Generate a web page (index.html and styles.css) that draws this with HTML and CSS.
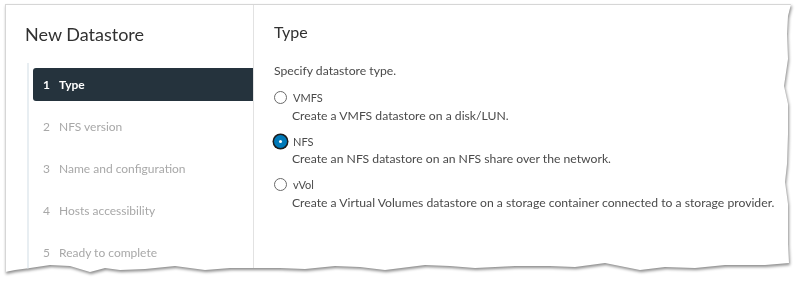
FILE: index.html
```html
<!DOCTYPE html>
<html lang="en">
<head>
  <meta charset="UTF-8">
  <title>New Datastore</title>
  <link rel="stylesheet" href="styles.css">
</head>
<body>
  <div class="paper">
    <div class="wizard">
      <div class="sidebar">
        <h2 class="wizard-title">New Datastore</h2>
        <div class="steps">
          <div class="step active"><span class="num">1</span>Type</div>
          <div class="step"><span class="num">2</span>NFS version</div>
          <div class="step"><span class="num">3</span>Name and configuration</div>
          <div class="step"><span class="num">4</span>Hosts accessibility</div>
          <div class="step"><span class="num">5</span>Ready to complete</div>
        </div>
      </div>
      <div class="content">
        <h3 class="page-title">Type</h3>
        <p class="intro">Specify datastore type.</p>
        <div class="option">
          <div class="radio-row"><span class="radio"></span><span class="label">VMFS</span></div>
          <p class="desc">Create a VMFS datastore on a disk/LUN.</p>
        </div>
        <div class="option">
          <div class="radio-row"><span class="radio checked"></span><span class="label">NFS</span></div>
          <p class="desc">Create an NFS datastore on an NFS share over the network.</p>
        </div>
        <div class="option">
          <div class="radio-row"><span class="radio"></span><span class="label">vVol</span></div>
          <p class="desc">Create a Virtual Volumes datastore on a storage container connected to a storage provider.</p>
        </div>
      </div>
    </div>
  </div>
</body>
</html>
```

FILE: styles.css
```css
body {
  margin: 0;
  padding: 4px 0 0 5px;
  background-color: #fff;
  font-family: 'Lato', sans-serif;
  color: #4a4a4a;
  overflow: hidden;
}

/* torn paper look */
.paper {
  width: 788px;
  height: 274px;
  filter: drop-shadow(1px 2px 1.5px rgba(0, 0, 0, 0.45));
}
.wizard {
  display: flex;
  height: 100%;
  overflow: hidden;
  background-color: #fff;
  border-top: 1px solid #d6d6d6;
  border-left: 1px solid #d6d6d6;
  box-sizing: border-box;
  clip-path: polygon(
    0 0, 786px 0, 783px 12px, 782px 30px, 783px 55px, 779px 82px, 783px 100px,
    783px 130px, 782px 160px, 780px 178px, 783px 200px, 783px 240px, 784px 259px,
    760px 261px, 720px 261px, 690px 264px, 660px 263px, 635px 266px, 600px 259px,
    570px 263px, 545px 262px, 510px 262px, 470px 264px, 445px 262px, 420px 261px,
    380px 266px, 355px 263px, 330px 262px, 300px 265px, 275px 264px, 250px 264px,
    225px 264px, 200px 266px, 170px 262px, 140px 265px, 115px 266px, 100px 264px,
    85px 268px, 65px 262px, 45px 261px, 25px 264px, 10px 266px, 0 268px
  );
}

.sidebar {
  width: 228px;
  flex: 0 0 228px;
  display: flex;
  flex-direction: column;
  border-right: 1px solid #e2e2e2;
  padding-left: 19px;
}
.wizard-title {
  margin: 17px 0 0;
  font-size: 18px;
  font-weight: 400;
  color: #313131;
  line-height: 24px;
}
.steps {
  flex: 1;
  margin-top: 17px;
  margin-left: 2px;
  border-left: 2px solid #e8eef2;
  padding: 5px 0 0 4px;
}
.step {
  height: 33px;
  margin-bottom: 9px;
  display: flex;
  align-items: center;
  padding-left: 10px;
  font-size: 12px;
  color: #a8a8a8;
  border-radius: 3px 0 0 3px;
}
.step .num {
  width: 12px;
  margin-right: 4px;
}
.step.active {
  background-color: #25333d;
  color: #fff;
  font-weight: 700;
}

.content {
  flex: 1;
  padding-left: 20px;
}
.page-title {
  margin: 16px 0 0;
  font-size: 16px;
  font-weight: 400;
  color: #313131;
  line-height: 22px;
}
.intro {
  margin: 20px 0 0;
  font-size: 12.2px;
  line-height: 16px;
}
.option {
  margin-top: 7.5px;
}
.option:first-of-type {
  margin-top: 8.5px;
}
.radio-row {
  display: flex;
  align-items: center;
  height: 20px;
}
.radio {
  width: 13px;
  height: 13px;
  border: 1px solid #6a6a6a;
  border-radius: 50%;
  margin: 0 6px 0 0;
  box-sizing: border-box;
}
.radio.checked {
  background-color: #0079b8;
  border: 3px solid #0079b8;
  box-shadow: 0 0 0 1.5px #1c1c1c;
  position: relative;
}
.radio.checked::after {
  content: '';
  position: absolute;
  left: 2px;
  top: 2px;
  width: 3px;
  height: 3px;
  background: #fff;
  border-radius: 50%;
}
.label {
  font-size: 11px;
  color: #4a4a4a;
}
.desc {
  margin: 0;
  padding-left: 18px;
  font-size: 12.2px;
  line-height: 16px;
}
```
